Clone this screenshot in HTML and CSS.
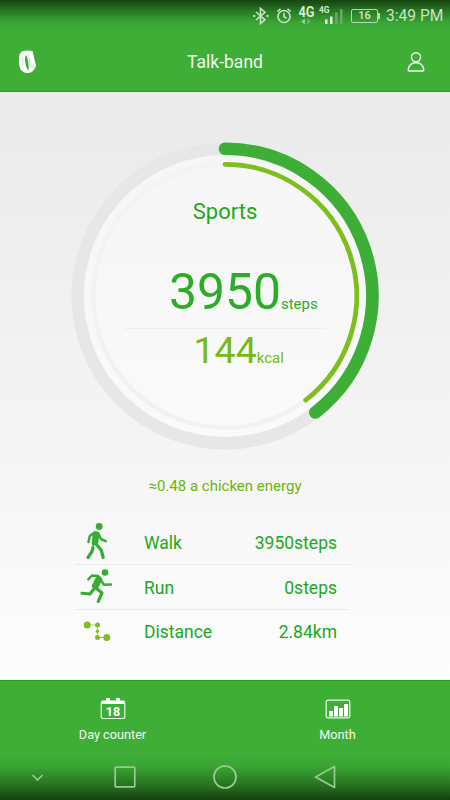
FILE: index.html
```html
<!DOCTYPE html>
<html lang="en">
<head>
<meta charset="utf-8">
<title>Talk-band</title>
<link rel="stylesheet" href="styles.css">
</head>
<body>
<div class="app">
  <header class="top">
    <div class="status">
      <svg class="s-icons" width="96" height="30" viewBox="0 0 96 30" fill="none">
        <g stroke="#c5e3c2" stroke-width="1.600">
          <path d="M5 11l9 7.800-4.500 3.700V7.500L14 11.200 5 19"/>
          <path d="M2.200 15h2M15.500 15h2" stroke-width="2"/>
          <circle cx="33" cy="15.500" r="6"/>
          <path d="M33 11.800v4l2.600 1.500M26.300 10.500l3.200-2.700M39.700 10.500l-3.200-2.700"/>
        </g>
        <path d="M54 17.500v6l-4-3z" fill="#9bcf98"/><path d="M56 17.500v6l4-3z" fill="#66b562"/>
        <path d="M74 18.500h2.500V23H74zM79 15.500h2.500V23H79z" fill="#e3f2e2"/>
        <path d="M84 11.500h2.500V23H84zM89 8h2.500v15H89z" fill="#68a965"/>
        <text class="net" x="47.500" y="16" textLength="16" lengthAdjust="spacingAndGlyphs">4G</text>
        <text class="net-small" x="68" y="12" textLength="10.500" lengthAdjust="spacingAndGlyphs">4G</text>
      </svg>
      <span class="battery">16</span>
      <span class="clock">3:49 PM</span>
    </div>
    <div class="titlebar">
      <svg class="band" width="20" height="24" viewBox="0 0 20 24">
        <path d="M4.500 1.200Q9-.200 14.500 1L18 15.500Q18.200 17 16.500 18.500Q14.500 23 9.500 23Q4.500 23 2.500 19Q.300 14 1 6.500Q1.700 2.500 4.500 1.200Z" fill="#fff"/>
        <path d="M8 4.500Q10.500 9 10.800 18.500Q10.500 20 10 20.500Q7.200 16 7 10Q7 6 8 4.500Z" fill="#3eae37"/>
        <path d="M4.800 7v9M11 16.800h7M10.500 3.500q1.500 6 1.300 12" fill="none" stroke="#a8d8a4" stroke-width=".7"/>
      </svg>
      <h1>Talk-band</h1>
      <svg class="user" width="20" height="22" viewBox="0 0 20 22" fill="none" stroke="#eef8ed" stroke-width="1.500">
        <circle cx="10" cy="6.200" r="4.500"/>
        <path d="M2.300 19.300C2 14.500 5.500 11.800 10 11.800s8 2.700 7.700 7.500q0 .8-.8.8H3.100q-.8 0-.8-.8Z"/>
      </svg>
    </div>
  </header>

  <main>
    <section class="gauge">
      <svg class="rings" width="310" height="310" viewBox="-155 -155 310 310" fill="none">
        <defs>
          <linearGradient id="fade" gradientUnits="userSpaceOnUse" x1="0" y1="-134" x2="0" y2="134">
            <stop offset="0" stop-color="#f3f4f4"/>
            <stop offset="1" stop-color="#f0f2f3"/>
          </linearGradient>
        </defs>
        <circle class="disc" r="142"/>
        <circle class="track" r="147.300"/>
        <circle class="track-thin" r="131.700" stroke="url(#fade)"/>
        <path class="arc" d="M0-147.300A147.300 147.300 0 0 1 90.300 116.400"/>
        <path class="arc-thin" d="M0-131.700A131.700 131.700 0 0 1 80.700 104.100"/>
      </svg>
      <h2>Sports</h2>
      <p class="steps">3950<small>steps</small></p>
      <p class="kcal">144<small>kcal</small></p>
    </section>
    <p class="energy">≈0.48 a chicken energy</p>
    <ul class="stats">
      <li>
        <svg width="40" height="44" viewBox="0 0 40 44" fill="none" stroke="#36ad32" stroke-linecap="round" stroke-linejoin="round">
          <circle cx="24.200" cy="6.500" r="3.400" fill="#36ad32" stroke="none"/>
          <path d="M20.300 13l2.500.5-1.300 9-3 1.500 1-10Z" fill="#36ad32" stroke-width="3.600"/>
          <path d="M19.500 12.500l-4.700 3.500-1.300 6M23.500 14l2.500 5 4.700 2.200" stroke-width="2.500"/>
          <path d="M20.500 23.500l5.700 6.500 2 7.500M18 27.500l-1 4-4 6" stroke-width="3.200"/>
        </svg>
        <span>Walk</span><b>3950steps</b>
      </li>
      <li>
        <svg width="40" height="44" viewBox="0 0 40 44" fill="none" stroke="#36ad32" stroke-linecap="round" stroke-linejoin="round">
          <circle cx="30" cy="7.500" r="3.300" fill="#36ad32" stroke="none"/>
          <path d="M23.500 12.500l1.500 2-4 8-2-1.500 3.500-7Z" fill="#36ad32" stroke-width="4.400"/>
          <path d="M23 11l-6-.5-3.700 3.800M25.500 14.500l3.500 5.200 7-.2" stroke-width="2.500"/>
          <path d="M20.500 22.500l6.500 5.500-3.800 8.500M18.500 24.500l-3.500 4.500-8-.7" stroke-width="3.100"/>
        </svg>
        <span>Run</span><b>0steps</b>
      </li>
      <li>
        <svg width="40" height="44" viewBox="0 0 40 44" fill="#7dbf21">
          <path d="M12 15h10.500v12.500H32" fill="none" stroke="#a9d46a" stroke-width="1"/>
          <path d="M22 27.500h10" stroke="#7dbf21"/>
          <circle cx="12.200" cy="15" r="3.500"/><circle cx="22.500" cy="15" r="2.500"/>
          <circle cx="22.500" cy="21.300" r="1.700"/><circle cx="22.500" cy="27.500" r="2.500"/>
          <circle cx="31.800" cy="27.500" r="3.500"/>
        </svg>
        <span>Distance</span><b>2.84km</b>
      </li>
    </ul>
  </main>

  <footer>
    <nav class="tabs">
      <a>
        <svg width="26" height="24" viewBox="0 0 26 24">
          <rect x="1.200" y="5.200" width="23.600" height="16.300" rx="2" fill="none" stroke="#e6f5e5" stroke-width="1.200"/>
          <path d="M1 7V5q0-1.500 1.500-1.500H6V1h4v2.500h6V1h4v2.500h3.500Q25 3.500 25 5v2Z" fill="#fff"/>
          <text class="day" x="13" y="18.800" text-anchor="middle">18</text>
        </svg>
        <span>Day counter</span>
      </a>
      <a>
        <svg width="26" height="24" viewBox="0 0 26 24">
          <rect x="1.200" y="3.200" width="23.600" height="17.600" rx="1.800" fill="none" stroke="#e6f5e5" stroke-width="1.300"/>
          <path d="M4 14h4v5.500H4zM9 9h4v10.500H9zM14 11h4v8.500h-4zM19 7h4v12.500h-4z" fill="#fff"/>
        </svg>
        <span>Month</span>
      </a>
    </nav>
    <div class="sysnav">
      <svg class="hide" width="24" height="24" viewBox="0 0 24 24"><path d="M7.500 10l5 5 5-5"/></svg>
      <svg width="24" height="24" viewBox="0 0 24 24"><rect x="2.200" y="2.200" width="19.600" height="19.600" rx=".8"/></svg>
      <svg width="24" height="24" viewBox="0 0 24 24"><circle cx="12" cy="12" r="11"/></svg>
      <svg width="24" height="24" viewBox="0 0 24 24"><path d="M2.500 12L21.500 1.500v21Z"/></svg>
    </div>
  </footer>
</div>
</body>
</html>
```
FILE: styles.css
```css
* { box-sizing: border-box; margin: 0; padding: 0; }
body { font-family: Roboto, "Liberation Sans", sans-serif; }
.app {
  width: 450px; height: 800px;
  display: flex; flex-direction: column; overflow: hidden;
}
svg { display: block; overflow: visible; flex: none; }

.top {
  height: 92px;
  background: linear-gradient(#14440f, #2a7d25 12px, #3aa634 23px, #3eae37 32px);
  border-bottom: 1px solid #22a51b;
}
.status {
  height: 31px; padding-right: 7px;
  display: flex; align-items: center; justify-content: flex-end;
}
.net, .net-small { font-weight: 700; fill: #d3e9d1; }
.net { font-size: 14.5px; }
.net-small { font-size: 9px; }
.battery {
  position: relative;
  width: 27px; height: 14px; margin: 0 8px 0 4px;
  border: 1.5px solid #b5d9b2; border-radius: 2px;
  color: #d3e9d1; font-size: 11px; font-weight: 500; line-height: 12px; text-align: center;
}
.battery::after {
  content: ""; position: absolute; right: -3px; top: 3px;
  width: 2px; height: 6px; background: #b5d9b2;
}
.clock { width: 57px; font-size: 15.6px; color: #c8e3c5; white-space: nowrap; }
.titlebar {
  height: 60px; padding: 0 24px 0 18px;
  display: grid; grid-template-columns: 60px 1fr 54px; align-items: center;
}
.titlebar h1 { font-size: 17.5px; font-weight: 400; color: #f1faf0; text-align: center; line-height: 24px; padding-top: 2px; }
.band { margin-top: 2px; }
.user { justify-self: end; margin-top: 2px; }

main { height: 588px; background: linear-gradient(#eaeaea, #f5f5f5 62%, #fdfdfd); }
.gauge {
  position: relative;
  height: 360px; padding-top: 105px;
  text-align: center;
}
.rings { position: absolute; left: 70px; top: 49.300px; }
.disc { fill: rgba(255, 255, 255, .5); }
.track { stroke: #e5e7e9; stroke-width: 12.600px; }
.track-thin { stroke-width: 4.600px; }
.arc { stroke: #3dae36; stroke-width: 12.600px; stroke-linecap: round; }
.arc-thin { stroke: #7dc01e; stroke-width: 4.800px; stroke-linecap: round; }
.gauge h2, .gauge p { position: relative; }
.gauge h2 { font-size: 22px; font-weight: 400; line-height: 30px; color: #20a81b; }
.steps, .kcal { width: 203px; margin-left: 124px; white-space: nowrap; text-align: left; }
.steps {
  height: 102px; padding-left: 45px;
  border-bottom: 1px solid #efefef;
  font-size: 49.800px; line-height: 130px; color: #2bad27;
}
.kcal { padding-left: 69.500px; font-size: 37.500px; line-height: 42px; color: #75bb12; }
.gauge small { font-size: 15px; line-height: 1; }
.energy { height: 68px; line-height: 68px; font-size: 15px; text-align: center; color: #69b70a; }
.stats { width: 275px; margin-left: 75px; list-style: none; }
.stats li {
  height: 45px; padding-right: 13px;
  display: flex; align-items: center;
  border-bottom: 1px solid #ebebeb;
  font-size: 17.500px; color: #20a81b;
}
.stats span { margin-left: 29px; }
.stats b { margin-left: auto; font-weight: 400; }
.stats span, .stats b { padding-top: 2px; }
.stats li:last-child { height: 44px; border: 0; }
.stats li:last-child span, .stats li:last-child b { padding-top: 0; }

footer {
  height: 120px;
  background: linear-gradient(#3eae37 72px, #3aa634 85px, #27711f 105px, #143f10);
  border-top: 1px solid #22a51b;
}
.tabs { height: 72px; display: grid; grid-template-columns: 1fr 1fr; }
.tabs a { display: flex; flex-direction: column; align-items: center; padding-top: 16px; }
.tabs span { margin-top: 5px; font-size: 12.700px; line-height: 18px; color: #f4fbf3; }
.day { font-size: 12.500px; font-weight: 700; fill: #fff; }
.sysnav {
  height: 48px; padding-left: 25px;
  display: flex; align-items: center; gap: 76px;
}
.sysnav svg { fill: none; stroke: #98cb94; stroke-width: 1.700px; stroke-linejoin: round; }
.sysnav .hide { margin-right: -12px; }
```
